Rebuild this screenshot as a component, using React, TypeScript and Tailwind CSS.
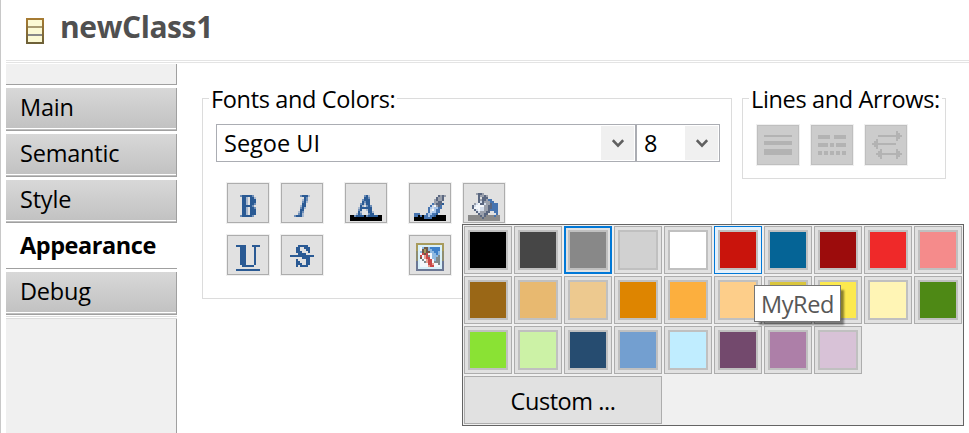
import React from 'react';

type Palette = Record<string, string>;

const ink: Palette = {
  d: '#2a5a94', m: '#6f8fb8', l: '#a9b9cf', k: '#000000', g: '#8a8a8a',
  s: '#5a6780', t: '#9aa0ac', w: '#f4f7fb', b: '#4674b0', c: '#a9c6ea', p: '#d3dcea',
  y: '#a89b5c', o: '#8f8d70', n: '#6b7794', e: '#d8f0fa', r: '#c84848', q: '#e8a090',
  u: '#3f80c8', v: '#8fb9e0', f: '#808a8c', h: '#6e5a48',
};

const icons = {
  bold: ['', '', '', '....mdddddm', '.....ddl.ddl', '.....ddl.ddd', '.....ddl.ddd', '.....ddl.ddm', '.....dddddm', '.....ddl.ddm', '.....ddl.ddd', '.....ddl.ddd', '.....ddl.ddd', '....mdddddm'],
  italic: ['', '', '', '.......mdddl', '.........dm', '........ldm', '........mdl', '........dd', '.......ldd', '.......mdl', '.......dd', '......ldm', '......mdl', '....mdddl'],
  underline: ['', '', '..ddddd...dddd', '....ddd....d', '....ddd....d', '....ddd....d', '....ddd....d', '....ddd....d', '....ddd....d', '....ddd....d', '....ddd....d', '....ddd....d', '.....dddddd', '', '..dddddddddddd'],
  strike: ['', '', '......ddddd', '.....dd..ddd', '.....dd...dd', '.....ddd...d', '......dddd', '..dddddddddddd', '........dddd', '.....d....dd', '.....dd...dd', '.....ddd..dd', '.....d.dddd'],
  letter: ['', '', '', '.......mdl', '.......ddm', '......mddd', '......dmdd', '.....mdldd', '.....dl.mdm', '....ldddddd', '....md..ldd', '....dl...ddl', '...ldm...mdd', 'kkmddddkmdddddkk', 'kkkkkkkkkkkkkkkk', 'kkkkkkkkkkkkkkkk'],
  brush: ['', '', '', '............stst', '...........stts', '..........tstts', '..........ttss', '.........btsssd', '........bpwtsb', '.......bcpccbb', '.......bpwcbb', '.......bpccbb', 'bbb...bccbbd', 'bbkbkbbcbbdkkkkk', 'kkkkkbbbbkkkkkkk', 'kkkkkkkkkkkkkkkk'],
  bucket: ['', '', '....tsst', '.....sttst', '.....s.sss', '.....stsstbb', '.....spstttbb', '...tpwsspttsbbb', '..spwwwwttssbbb', '..swwwppttssbbb', '...spwppttsbbbb', '....sptttss..bb', '.....sttss....b', 'ggggggstsggggbgg', 'gggggggsgggggggg', 'gggggggggggggggg'],
  image: ['', '.yyyyyyyyyyyyyy', '.yeeeeeeeeeeeey', '.yewvhhvuuuuuey', '.yewhyhvvuuuuey', '.oevhyhhvvuuveo', '.oewrhrwwvvuveo', '.oerwqrfwvvvfeo', '.oehwqrrwvvffeo', '.oewfwqrrwvffeo', '.newwfqrrwfffen', '.newwwwrrqwwfen', '.newwwwqrrwwwen', '.neeeeeeeeeeeen', '.nnnnnnnnnnnnnn'],
};

function PixelIcon({ name }: { name: keyof typeof icons }) {
  return (
    <svg width="32" height="32" viewBox="0 0 16 16" shapeRendering="crispEdges" className="block shrink-0">
      {icons[name].flatMap((row, y) =>
        [...row].map((c, x) => c === '.' ? null : <rect key={`${x}-${y}`} x={x} y={y} width="1" height="1" fill={ink[c]} />),
      )}
    </svg>
  );
}

function ToolButton({ name, className = '' }: { name: keyof typeof icons; className?: string }) {
  return (
    <button className={`h-10 w-[42px] shrink-0 border border-[#adadad] bg-[#e1e1e1] pl-1 pt-[3px] shadow-[0_0_0_1px_#f0f0f0] ${className}`}>
      <PixelIcon name={name} />
    </button>
  );
}

const Shape = ({ kind }: { kind: number }) => (
  <svg width="40" height="38" viewBox="0 0 40 38" fill="#b3b3b3" shapeRendering="crispEdges" className="block">
    {kind === 0 && <path d="M6 9h28v2H6zM6 15h28v4H6zM6 23h28v6H6z" />}
    {kind === 1 && <path d="M6 9h12v4H6zM22 9h12v4H22zM6 17h10v4H6zM18 17h4v4h-4zM24 17h10v4H24zM6 25h4v4H6zM12 25h4v4h-4zM18 25h4v4h-4zM24 25h4v4h-4zM30 25h4v4h-4z" />}
    {kind === 2 && <path d="M12 9h18V5h2v2h2v2h2v2h-2v2h-2v2h-2v-4H12zM6 17h2v-2h2v-2h2v4h18v2H12v4h-2v-2H8v-2H6zM10 27h2v-2h2v-2h2v4h14v-4h2v2h2v2h2v2h-2v2h-2v2h-2v-4H16v4h-2v-2h-2v-2h-2z" />}
  </svg>
);

function Combo({ value, className }: { value: string; className: string }) {
  return (
    <div className={`flex h-[38px] border border-[#abadb3] bg-white p-px ${className}`}>
      <span className="flex-1 pl-1.5 leading-[35px]">{value}</span>
      <span className="flex w-[33px] items-center justify-center bg-[#f0f0f0]">
        <svg width="12" height="9" viewBox="0 0 12 9" fill="none" stroke="#606060" strokeWidth="2.6"><path d="M.8 1.2 6 6.6l5.2-5.4" /></svg>
      </span>
    </div>
  );
}

function Tab({ label }: { label: string }) {
  return (
    <div className="h-[46px] pt-[3px]">
      <div className="h-[43px] border-b border-r border-[#a0a0a0] shadow-[0_-2px_0_#fff]">
        <div className="h-10 bg-linear-to-b from-[#d8d8d8] to-[#c2c2c2] pl-3.5 leading-[39px] tracking-[-0.2px]">{label}</div>
        <div className="h-px bg-white" />
        <div className="h-px bg-[#c0c0c0]" />
      </div>
    </div>
  );
}

const colors = [
  'bg-black', 'bg-[#464646]', 'bg-[#888888]', 'bg-[#d1d1d1]', 'bg-white', 'bg-[#c9140c]', 'bg-[#056496]', 'bg-[#9c0c0c]', 'bg-[#ef2929]', 'bg-[#f58b8b]',
  'bg-[#9a6716]', 'bg-[#e8b970]', 'bg-[#edc98f]', 'bg-[#de8500]', 'bg-[#fcaf3e]', 'bg-[#fdce8a]', 'bg-[#d9c53c]', 'bg-[#fce94f]', 'bg-[#fff5b5]', 'bg-[#4e8915]',
  'bg-[#8ae234]', 'bg-[#ccf2a6]', 'bg-[#264c70]', 'bg-[#739fd0]', 'bg-[#c0edff]', 'bg-[#73496d]', 'bg-[#ad7fa8]', 'bg-[#d8c2d7]',
];

function ColorPopup() {
  return (
    <div className="absolute left-[461px] top-[224px] h-[202px] w-[502px] border border-[#646464] bg-[#f0f0f0] p-px">
      <div className="grid grid-cols-[repeat(10,48px)] gap-0.5">
        {colors.map((color, i) => (
          <div key={color} className={`flex size-12 items-center justify-center ${i === 2 ? 'border-2 border-[#0078d7] bg-[#e1e1e1]' : i === 5 ? 'border border-[#0078d7] bg-[#e5f1fb]' : 'border border-[#adadad] bg-[#e1e1e1]'}`}>
            <div className={`size-10 shrink-0 border-2 border-[#c0c0c0] ${color}`} />
          </div>
        ))}
      </div>
      <button className="mt-0.5 block h-12 w-[198px] border border-[#adadad] bg-[#e1e1e1] pt-[3px] tracking-[-0.45px]">Custom ...</button>
      <div className="absolute left-[291px] top-[60px] h-[37px] w-[87px] border border-[#767676] bg-white pl-1.5 leading-[37px] tracking-[-0.4px] text-[#575757] shadow-[4px_4px_2px_-1px_rgba(0,0,0,0.45)]">MyRed</div>
    </div>
  );
}

export default function App() {
  return (
    <div className="relative flex h-[433px] w-[969px] flex-col overflow-hidden border-l border-[#c8c8c8] bg-white pl-[5px] font-['Open_Sans','Noto_Sans',sans-serif] text-[23.5px] text-black">
      <header className="flex h-[60px] shrink-0 items-start">
        <svg width="18" height="26" viewBox="0 0 18 26" shapeRendering="crispEdges" className="ml-5 mt-[18px]">
          <defs><linearGradient id="edge" x2="0" y2="1"><stop stopColor="#a87c32" /><stop offset="1" stopColor="#6c6038" /></linearGradient></defs>
          <path fill="url(#edge)" d="M0 0h18v26H0z" />
          <path fill="#fbf9d4" d="M2 2h14v22H2z" />
          <path fill="#a89b72" d="M2 8h14v2H2z" /><path fill="#888" d="M2 16h14v2H2z" />
        </svg>
        <h1 className="ml-4 mt-[5px] text-[30px] font-bold leading-[44px] tracking-[-0.4px] text-[#505050]">newClass1</h1>
      </header>
      <div className="h-[3px] shrink-0 border-y border-[#e4e4e4]" />
      <div className="flex flex-1">
        <nav className="flex w-[171px] flex-col">
          <div className="mt-px h-[21px] border-b border-r border-[#a0a0a0] bg-[#f0f0f0]" />
          <Tab label="Main" />
          <Tab label="Semantic" />
          <Tab label="Style" />
          <div className="h-[46px] border-b border-[#a0a0a0] pl-3.5 font-bold leading-[45px] tracking-[-0.45px]">Appearance</div>
          <Tab label="Debug" />
          <div className="mt-px h-[3px] border-y border-[#dcdcdc]" />
          <div className="flex-1 border-r border-[#a0a0a0] bg-[#f0f0f0]" />
        </nav>
        <main className="flex flex-1 items-start gap-2.5 pl-[25px] pt-[35px]">
          <section className="h-[201px] w-[530px] border border-[#dcdcdc]">
            <h2 className="-mt-4 ml-1.5 h-[41px] w-fit bg-white px-0.5 leading-[33px] tracking-[-0.35px]">Fonts and Colors:</h2>
            <div className="ml-[13px] flex">
              <Combo value="Segoe UI" className="w-[420px]" />
              <Combo value="8" className="w-[84px]" />
            </div>
            <div className="ml-6 mt-[21px] flex">
              <ToolButton name="bold" /><ToolButton name="italic" className="ml-3" /><ToolButton name="letter" className="ml-[22px]" />
              <ToolButton name="brush" className="ml-[22px]" /><ToolButton name="bucket" className="ml-3" />
            </div>
            <div className="ml-6 mt-3 flex">
              <ToolButton name="underline" /><ToolButton name="strike" className="ml-3" /><ToolButton name="image" className="ml-[86px]" />
            </div>
          </section>
          <section className="h-[81px] w-[204px] border border-[#dcdcdc]">
            <h2 className="-mt-4 ml-1.5 h-[42px] w-fit whitespace-nowrap bg-white px-0.5 leading-[33px] tracking-[-0.35px]">Lines and Arrows:</h2>
            <div className="ml-3.5 flex gap-3">
              {[0, 1, 2].map((kind) => (
                <div key={kind} className="h-10 w-[42px] border border-[#bfbfbf] bg-[#cccccc] shadow-[0_0_0_1px_#f0f0f0]"><Shape kind={kind} /></div>
              ))}
            </div>
          </section>
        </main>
      </div>
      <ColorPopup />
    </div>
  );
}
